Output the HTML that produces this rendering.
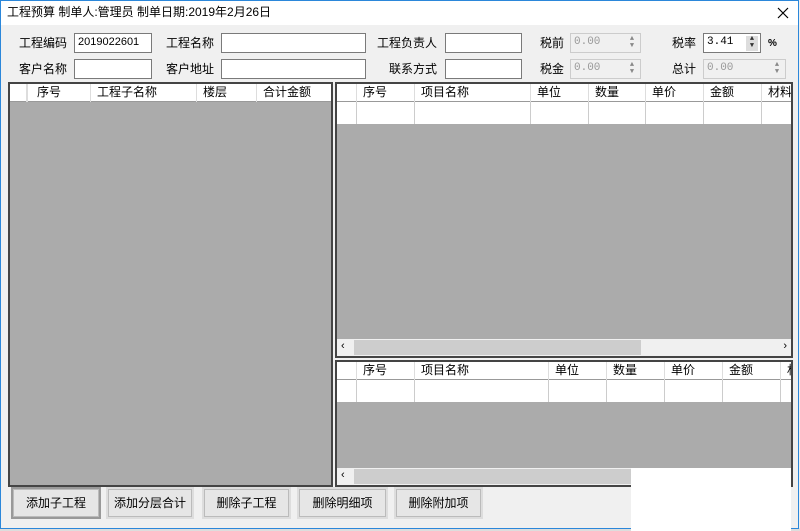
<!DOCTYPE html>
<html><head><meta charset="utf-8"><style>
*{box-sizing:border-box;margin:0;padding:0}
body{width:800px;height:531px;position:relative;overflow:hidden;background:#f0f0f0;font-family:"Liberation Sans","Noto Sans CJK SC",sans-serif;font-size:12px;color:#000}
.a{position:absolute}
.win{left:0;top:0;width:799px;height:529px;border:1px solid #2b87da;background:#f0f0f0}
.title{left:1px;top:1px;width:797px;height:24px;background:#fff}
.lbl{position:absolute;font-size:12px;line-height:14px}
.in{position:absolute;background:#fff;border:1px solid #7a7a7a;height:20px;font-size:11px;padding:2px 3px;font-family:"Liberation Sans",sans-serif}
.dis{background:#f0f0f0;border-color:#ccc;color:#999;font-family:"Liberation Mono",monospace}
.sp{position:absolute;right:2px;top:2px;width:12px;height:15px;color:#888;font-size:7px;line-height:7px;text-align:center}
.grid{position:absolute;border:2px solid #444;background:#ababab;overflow:hidden}
.hd{position:absolute;left:0;top:0;height:18px;background:#fff;border-bottom:1px solid #999;width:100%;white-space:nowrap}
.c{position:absolute;top:0;height:18px;border-left:1px solid #ddd;font-size:12px;line-height:17px;padding-left:6px}
.row{position:absolute;left:0;top:18px;height:22px;background:#fff}
.rc{position:absolute;top:0;height:22px;border-left:1px solid #ccc}
.btn{position:absolute;top:487px;height:32px;border:2px solid #ddd;background:#e6e6e6;text-align:center;line-height:28px;font-size:12px;box-shadow:inset 0 0 0 1px #bbb}
.sb{position:absolute;left:0;height:17px;background:#f0f0f0;width:100%}
</style></head><body>
<div class="a" style="left:0;top:528px;width:800px;height:3px;background:#ddd"></div>
<div class="a win"></div>
<div class="a title"></div>
<div class="lbl" style="left:7px;top:5px">工程预算 制单人:管理员 制单日期:2019年2月26日</div>
<svg class="a" style="left:777px;top:7px" width="12" height="12"><path d="M1 1L11 11M11 1L1 11" stroke="#000" stroke-width="1.2"/></svg>

<div class="lbl" style="left:19px;top:36px">工程编码</div>
<div class="in" style="left:74px;top:33px;width:78px">2019022601</div>
<div class="lbl" style="left:166px;top:36px">工程名称</div>
<div class="in" style="left:221px;top:33px;width:145px"></div>
<div class="lbl" style="left:377px;top:36px">工程负责人</div>
<div class="in" style="left:445px;top:33px;width:77px"></div>
<div class="lbl" style="left:540px;top:36px">税前</div>
<div class="in dis" style="left:570px;top:33px;width:71px">0.00<div class="sp">▲<br>▼</div></div>
<div class="lbl" style="left:672px;top:36px">税率</div>
<div class="in" style="left:703px;top:33px;width:58px;font-family:'Liberation Mono',monospace">3.41<div class="sp" style="color:#333;background:#ddd">▲<br>▼</div></div>
<div class="lbl" style="left:768px;top:37px;font-size:10px;font-weight:bold">%</div>

<div class="lbl" style="left:19px;top:62px">客户名称</div>
<div class="in" style="left:74px;top:59px;width:78px"></div>
<div class="lbl" style="left:166px;top:62px">客户地址</div>
<div class="in" style="left:221px;top:59px;width:145px"></div>
<div class="lbl" style="left:389px;top:62px">联系方式</div>
<div class="in" style="left:445px;top:59px;width:77px"></div>
<div class="lbl" style="left:540px;top:62px">税金</div>
<div class="in dis" style="left:570px;top:59px;width:71px">0.00<div class="sp">▲<br>▼</div></div>
<div class="lbl" style="left:672px;top:62px">总计</div>
<div class="in dis" style="left:703px;top:59px;width:83px">0.00<div class="sp">▲<br>▼</div></div>

<div class="grid" style="left:8px;top:82px;width:325px;height:405px">
 <div class="hd">
  <div class="c" style="left:16px"></div>
  <div class="c" style="left:17px;padding-left:9px">序号</div>
  <div class="c" style="left:80px">工程子名称</div>
  <div class="c" style="left:186px">楼层</div>
  <div class="c" style="left:246px">合计金额</div>
 </div>
</div>

<div class="grid" style="left:335px;top:82px;width:458px;height:276px">
 <div class="hd">
  <div class="c" style="left:19px">序号</div>
  <div class="c" style="left:77px">项目名称</div>
  <div class="c" style="left:193px">单位</div>
  <div class="c" style="left:251px">数量</div>
  <div class="c" style="left:308px">单价</div>
  <div class="c" style="left:366px">金额</div>
  <div class="c" style="left:424px">材料</div>
 </div>
 <div class="row" style="width:458px">
  <div class="rc" style="left:19px"></div><div class="rc" style="left:77px"></div><div class="rc" style="left:193px"></div><div class="rc" style="left:251px"></div><div class="rc" style="left:308px"></div><div class="rc" style="left:366px"></div><div class="rc" style="left:424px"></div>
 </div>
 <div class="sb" style="top:255px"><div class="a" style="left:17px;top:1px;width:287px;height:15px;background:#cdcdcd"></div><div class="a" style="left:4px;top:1px;font-size:11px">‹</div><div class="a" style="right:4px;top:1px;font-size:11px">›</div></div>
</div>

<div class="grid" style="left:335px;top:360px;width:458px;height:127px">
 <div class="hd">
  <div class="c" style="left:19px">序号</div>
  <div class="c" style="left:77px">项目名称</div>
  <div class="c" style="left:211px">单位</div>
  <div class="c" style="left:269px">数量</div>
  <div class="c" style="left:327px">单价</div>
  <div class="c" style="left:385px">金额</div>
  <div class="c" style="left:443px">材</div>
 </div>
 <div class="row" style="width:458px">
  <div class="rc" style="left:19px"></div><div class="rc" style="left:77px"></div><div class="rc" style="left:211px"></div><div class="rc" style="left:269px"></div><div class="rc" style="left:327px"></div><div class="rc" style="left:385px"></div><div class="rc" style="left:443px"></div>
 </div>
 <div class="sb" style="top:106px"><div class="a" style="left:17px;top:1px;width:287px;height:15px;background:#cdcdcd"></div><div class="a" style="left:4px;top:1px;font-size:11px">‹</div></div>
</div>

<div class="btn" style="left:11px;width:90px;border-color:#999">添加子工程</div>
<div class="btn" style="left:106px;width:88px">添加分层合计</div>
<div class="btn" style="left:202px;width:89px">删除子工程</div>
<div class="btn" style="left:297px;width:91px">删除明细项</div>
<div class="btn" style="left:394px;width:89px">删除附加项</div>
<div class="a" style="left:631px;top:468px;width:160px;height:63px;background:#fff"></div>
</body></html>
